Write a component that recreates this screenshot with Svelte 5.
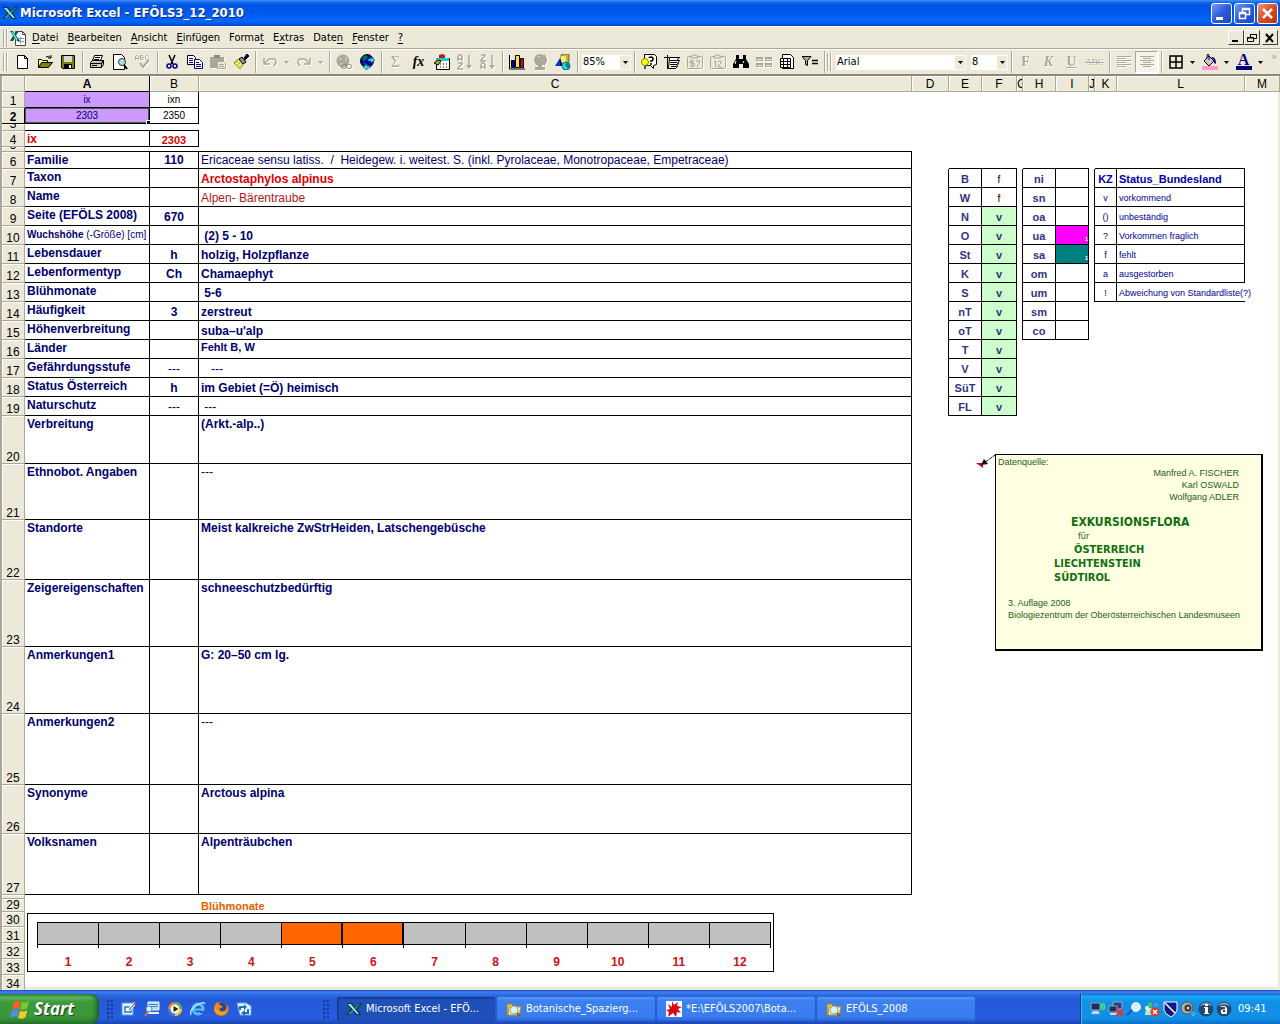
<script lang="ts">
  type Cell = { v: string; cls?: string };
  type Row = { n: number; h: number; cells?: Record<string, Cell> };

  const menus = [
    ["", "D", "atei"],
    ["", "B", "earbeiten"],
    ["", "A", "nsicht"],
    ["", "E", "infügen"],
    ["Forma", "t", ""],
    ["E", "x", "tras"],
    ["Date", "n", ""],
    ["", "F", "enster"],
    ["", "?", ""],
  ];

  // ========
  // Icons
  // ========

  const bw = 'fill="#fff" stroke="#000"';
  const folder =
    '<path d="M1 3h5l1 2h7v9H1z" fill="#f0c850" stroke="#a87818"/><path d="M3 6h12l-2 8H2z" fill="#ffe9a0" stroke="#c09028"/><circle cx="8" cy="9" r="4" fill="#d8f4ff" stroke="#78b0c8"/><path d="M11 12l3 3" stroke="#806020" stroke-width="2"/>';
  const orb = '<circle cx="8" cy="8" r="7.500" fill="#234a72"/><path d="M2 5a7 7 0 0 1 12 0q-6-3-12 0" fill="#7fa8c8"/>';

  const icons: Record<string, string> = {
    excel:
      '<path d="M1 2h5l3 4 4-4h3l-5 6 4 6h-5L7 10l-4 4H0l5-6z" fill="#083838"/><path d="M2 3h3l8 10h-2z" fill="#58d8d0"/><path d="M13 3h1L4 13H2z" fill="#30b8b0"/><path d="M3 3l9 10" stroke="#e8ffff"/>',
    book:
      '<path d="M5.500 1.500h7l3 3v11h-10z" fill="#fff" stroke="#444"/><path d="M12.500 1.500v3h3" fill="none" stroke="#444"/><path d="M8 8.500h6M8 11.500h6M10.500 7v7" stroke="#99a"/><path d="M0 1h3l2 3 2-3h2L6 5.500 10 11H7L5 8l-2 3H0l3-5z" fill="#055"/><path d="M2 2l5 8" stroke="#5fe8e0" stroke-width="1.500"/>',
    new: `<path d="M3.500 1.500h7l3 3v10h-10z" ${bw}/><path d="M10.500 1.500v3h3" fill="none" stroke="#000"/>`,
    open:
      '<path d="M1.500 13.500v-8h3l1 1h5v3" fill="#ffff80" stroke="#000"/><path d="M1.500 13.500l3-5h11l-4 5z" fill="#808000" stroke="#000"/><path d="M9 3q3-2 5 1M14 1v3h-3" fill="none" stroke="#000"/>',
    save:
      '<path d="M1.500 1.500h13v13h-12l-1-1z" fill="#808000" stroke="#000"/><path d="M4 2h8v6H4z" fill="#d8d8d0"/><path d="M4 10h8v4H4z" fill="#000"/><path d="M9 11h2v3H9z" fill="#fff"/>',
    print:
      '<path d="M5.500 1.500h8l-2 5h-8z" fill="#fff" stroke="#000"/><path d="M6 3.500h5M5 5.500h5" stroke="#000"/><path d="M1.500 8.500l2-2h11l-2 3h-11zM1.500 9.500h11v4h-11zM12.500 9.500l2-3v4l-2 3" fill="#c8c8c0" stroke="#000"/><path d="M3 11.500h5" stroke="#000"/><path d="M9 11h2v1H9z" fill="#ff0"/>',
    preview:
      '<path d="M1.500 .5h8l3 3v12h-11z" fill="#fff" stroke="#000"/><circle cx="10" cy="8" r="3.500" fill="#b0e0e8" stroke="#333"/><path d="M12 11l3 4" stroke="#000" stroke-width="2"/>',
    spell:
      '<path d="M.5 6V2.500l1-1h1l1 1V6M.5 4.500h3M5.500 5.500v-4h2l1 1-1 1h-2 2l1 1-1 1zM13.500 2.500l-1-1h-1l-1 1v2l1 1h1l1-1" fill="none" stroke="#aca899"/><path d="M5 9l3 4 6-7" fill="none" stroke="#aca899" stroke-width="2"/>',
    cut:
      '<path d="M5 1l4 9M11 1L7 10" stroke="#000" stroke-width="1.500"/><circle cx="5" cy="12" r="2" fill="none" stroke="#008" stroke-width="1.500"/><circle cx="11" cy="12" r="2" fill="none" stroke="#008" stroke-width="1.500"/>',
    copy:
      '<path d="M.5 1.500h6l2 2v7h-8z" fill="#fff" stroke="#000"/><path d="M2 4.500h4M2 6.500h4M2 8.500h4" stroke="#008"/><path d="M7.500 5.500h5l3 3v6h-8z" fill="#fff" stroke="#008"/><path d="M9 8.500h3M9 10.500h5M9 12.500h5" stroke="#008"/>',
    paste:
      '<path d="M0 3h14v11H0z" fill="#aca899"/><path d="M4 1h6v3H4z" fill="#8d897a"/><path d="M7.500 7.500h6l2 2v5h-8z" fill="#ece9d8" stroke="#aca899"/><path d="M9 10.500h5M9 12.500h5" stroke="#aca899"/>',
    brush:
      '<path d="M11 4l3-4 2 2-4 4z" fill="#008" stroke="#000"/><path d="M6 5l3-2 4 5-3 2z" fill="#a88" stroke="#000"/><path d="M5 5l5 6-3 4-6-6z" fill="#ffff70" stroke="#886"/><path d="M2 9l3-2M4 11l3-2M6 13l2-2" stroke="#aa0"/><path d="M0 14h3v1H0z" fill="#ff6"/>',
    undo: '<path d="M2 4v6h6M3 9l4-4h4q3 0 3 4l-2 3" fill="none" stroke="#aca899" stroke-width="1.500"/>',
    redo: '<path d="M14 4v6H8M13 9L9 5H5Q2 5 2 9l2 3" fill="none" stroke="#aca899" stroke-width="1.500"/>',
    link:
      '<circle cx="7" cy="7" r="6.500" fill="#aca899"/><path d="M3 4h3v2H3zM9 3h2v4H9zM4 9h3v2H4z" fill="#c8c4b4"/><rect x="5.500" y="10.500" width="5" height="4" rx="2" fill="none" stroke="#8d897a"/><rect x="10.500" y="10.500" width="5" height="4" rx="2" fill="none" stroke="#8d897a"/>',
    web:
      '<circle cx="8" cy="7" r="6.500" fill="#0000b8" stroke="#000"/><path d="M3 3l4-2 2 2-2 3-3 1zM10 3l4 2v4l-3-2z" fill="#007830"/><path d="M4 8l4 2-1 3z" fill="#007830"/><path d="M9 5h3V3l4 3-4 3V7H9zM11 12H8v-2l-4 3 4 3v-2h3z" fill="#30e8f0" stroke="#044" stroke-width=".5"/>',
    fnwiz:
      '<path d="M2.500 4.500h13v11h-13z" fill="#fff" stroke="#000"/><path d="M2 4h13v3H2z" fill="#20c8d8"/><path d="M5 4V1l3-1 3 1v3z" fill="#b02020"/><path d="M0 9l4-3 3 1-3 4z" fill="#b8b800" stroke="#000"/><path d="M6 10h1M9 10h1M12 10h1M6 13h1M9 13h1M12 13h1" stroke="#000"/>',
    sortaz:
      '<path d="M1 7V3l1-2h2l1 2v4M1 5h4M1 9h4v1l-4 4v1h5" fill="none" stroke="#aca899" stroke-width="1.500"/><path d="M12 1v10" stroke="#aca899" stroke-width="1.500"/><path d="M9 11h6l-3 4z" fill="#aca899"/>',
    sortza:
      '<path d="M1 1h4v1L1 6v1h5M1 15v-4l1-2h2l1 2v4M1 13h4" fill="none" stroke="#aca899" stroke-width="1.500"/><path d="M12 1v10" stroke="#aca899" stroke-width="1.500"/><path d="M9 11h6l-3 4z" fill="#aca899"/>',
    chart:
      '<path d="M.5 1v14H16" fill="none" stroke="#000"/><path d="M2.500 6.500h3v7h-3z" fill="#0000b0" stroke="#000"/><path d="M6.500 1.500h4v12h-4z" fill="#ffe040" stroke="#000"/><path d="M11.500 4.500h3v9h-3z" fill="#d01010" stroke="#000"/>',
    globe:
      '<circle cx="8" cy="6" r="6" fill="#aca899"/><path d="M12 1q4 5 0 10M7 12h2v2H7zM4 14h8v1H4z" fill="none" stroke="#aca899" stroke-width="2"/><path d="M6 2h2v1H6z" fill="#ddd"/>',
    draw:
      '<path d="M6 1l3-1h5v8l-2 1H6z" fill="#c8b030" stroke="#665"/><path d="M6 2h5v7H6z" fill="#ffec60"/><path d="M0 12l5-8v8z" fill="#1030d0"/><path d="M5 4l3 8H5z" fill="#000070"/><circle cx="11" cy="12" r="4" fill="#20d8e8" stroke="#078"/><path d="M12 8q4 2 3 5l-2 2-3-4z" fill="#108080"/>',
    help:
      '<path d="M3.500 .5h10l2 2v8l-3 1v3l-3-3h-6z" fill="#fffff0" stroke="#000"/><path d="M8 4q0-1 2-1 2 0 2 2t-2 2v1M10 9v2" fill="none" stroke="#000" stroke-width="1.500"/><circle cx="4" cy="8" r="3.500" fill="#ff0" stroke="#880"/><path d="M3 12h2v3H3z" fill="#555"/>',
    autofmt:
      '<path d="M3.500 1v14M0 3.500h16" stroke="#000"/><path d="M5.500 3.500h9l-1 3h2l-2 3h1l-2 3h1l-2 2h-7z" fill="#fff" stroke="#000"/><path d="M6 6.500h8M6 8.500h7M6 10.500h7M7 12.500h5" stroke="#000"/>',
    clip7:
      '<rect x=".5" y="2.500" width="15" height="12" rx="1" fill="#ece9d8" stroke="#aca899"/><path d="M4 4V2h2V1h3v1h2v2z" fill="#ece9d8" stroke="#aca899"/><path d="M7 7H3v2h4v3H3M5 6v7M9 7h4l-3 6" fill="none" stroke="#aca899"/>',
    clip12:
      '<rect x=".5" y="2.500" width="15" height="12" rx="1" fill="#ece9d8" stroke="#aca899"/><path d="M4 4V2h2V1h3v1h2v2z" fill="#ece9d8" stroke="#aca899"/><path d="M4 8l1.500-1v6M8 8l1-1h2v2l-3 3v1h4" fill="none" stroke="#aca899"/>',
    find:
      '<path d="M3 1h3v4h4V1h3v4l3 5v4h-6v-4H6v4H0v-4l3-5z" fill="#000"/><path d="M3 7l-1 3M11 7l-1 2" stroke="#fff"/>',
    panes:
      '<path d="M0 3h7v4H0zM9 3h7v4H9zM0 9h7v4H0zM9 9h7v4H9z" fill="#aca899"/><path d="M1 5.500h5M10 5.500h5M1 11.500h5M10 11.500h5" stroke="#ece9d8"/>',
    sheet:
      '<path d="M3.500 .5h8l3 3v11h-11z" fill="#fff" stroke="#000"/><path d="M1.500 4.500h10v9h-10z" fill="#fff" stroke="#000"/><path d="M1 7.500h10M1 10.500h10M4.500 4v9M8.500 4v9" stroke="#000"/>',
    filter:
      '<path d="M0 2.500h9l-3.500 4v5l-2-1v-4z" fill="#aaa" stroke="#000"/><path d="M10 6.500h6M10 9.500h6" stroke="#000" stroke-width="1.500"/>',
    left: '<path d="M1 2.500h14M1 4.500h9M1 6.500h14M1 8.500h9M1 10.500h14M1 12.500h9" stroke="#aca899"/>',
    center: '<path d="M1 2.500h14M4 4.500h8M1 6.500h14M4 8.500h8M1 10.500h14M4 12.500h8" stroke="#aca899"/>',
    borders: '<path d="M2 2h12v12H2zM8 2v12M2 8h12" fill="none" stroke="#000" stroke-width="1.500"/>',
    fill:
      '<path d="M2 7l5-5 5 5-5 5z" fill="#c8c8c0" stroke="#000"/><path d="M5 4V1q1-2 2 0v5" fill="none" stroke="#000080"/><path d="M9 3q5-1 5 7l-2-1V6z" fill="#000080"/><path d="M0 12h16v4H0z" fill="#ff99cc"/>',
    launchDesk:
      '<path d="M1 2h11v12H1z" fill="#e0f4ff" stroke="#58a0e0"/><path d="M4 6h6v5H4z" fill="#fff" stroke="#2878c0" stroke-width="1.500"/><path d="M8 9l6-7" stroke="#fff" stroke-width="3"/><path d="M8 9l6-7" stroke="#204878"/><path d="M13 1h2v3h-2z" fill="#e04830"/>',
    launchFind:
      '<path d="M4 1h11v8H4z" fill="#b8dcf8" stroke="#e8f4ff"/><path d="M5 3.500h9M5 5.500h9" stroke="#4888c8"/><path d="M4 11h11v2H4z" fill="#f0f0e0"/><circle cx="5" cy="8" r="3" fill="#d0f0ff" stroke="#68a"/><path d="M4 11l-3 4" stroke="#c07848" stroke-width="2"/>',
    media:
      '<circle cx="8" cy="8" r="7" fill="#f08020"/><path d="M8 1a7 7 0 0 1 7 7H8z" fill="#50b040"/><path d="M1 8a7 7 0 0 0 7 7V8z" fill="#3878d8"/><path d="M15 8a7 7 0 0 1-7 7V8z" fill="#f0c830"/><circle cx="8" cy="8" r="4.500" fill="#fff"/><path d="M6.500 5l5 3-5 3z" fill="#222"/>',
    ie:
      '<circle cx="8" cy="8" r="5" fill="none" stroke="#58c0f8" stroke-width="3"/><path d="M4 8.500h9" stroke="#58c0f8" stroke-width="2"/><path d="M10 10h6v2h-6z" fill="#245ad8"/><path d="M1 14Q-1 9 7 4q7-4 8-1" fill="none" stroke="#a8e0ff" stroke-width="1.500"/>',
    firefox:
      '<circle cx="8" cy="8" r="7" fill="#e06810"/><circle cx="9" cy="6" r="4.500" fill="#284898"/><path d="M1 7q1-5 4-6 0 2 2 3l3 2-4 2q1 3 5 2t3-7q4 7-2 11-8 2-11-4z" fill="#f08818"/><path d="M2 8q3 6 10 4" fill="none" stroke="#ffc840"/>',
    sync:
      '<path d="M1 2h9l5 3v9H4z" fill="#e8f8ff" stroke="#60a8e0"/><path d="M3 9V5h5V3l3 3-3 3V7H5v2zM13 8v5H9v2l-4-3 4-3v2h2V8z" fill="#2070c0"/>',
    folder,
    redapp:
      '<path d="M0 0h16v16H0z" fill="#fff"/><path d="M6 0l2 4 4-3-1 4 5 1-4 2 3 4-4-1-1 5-3-4-5 4 1-5-3-2 4-1-2-5 4 3z" fill="#d80818"/>',
    net:
      '<path d="M1 2h9v7H1z" fill="#183060" stroke="#8ab"/><path d="M3 10h5l2 3H1z" fill="#c8d8e8"/><path d="M11 3q2 2 0 5M13 2q3 4 0 7" fill="none" stroke="#50f050" stroke-width="1.500"/>',
    netoff:
      '<path d="M5 1h9v7H5z" fill="#304078" stroke="#9ac"/><path d="M1 5h8v6H1z" fill="#183060" stroke="#8ab"/><path d="M2 12h7v2H2z" fill="#c8d8e8"/><path d="M8 8l7 7M15 8l-7 7" stroke="#f02830" stroke-width="2"/>',
    lens: '<circle cx="10" cy="6" r="4.500" fill="#d8f4ff" stroke="#e8f8ff"/><path d="M6 9l-5 5" stroke="#3050a0" stroke-width="2"/>',
    people:
      '<circle cx="6" cy="4" r="2.500" fill="#48c068"/><circle cx="12" cy="4" r="2.500" fill="#4898e0"/><path d="M1 14q0-7 5-7t5 7z" fill="#b8e8c0"/><circle cx="3" cy="7" r="2" fill="#fff"/><circle cx="11" cy="11" r="4.500" fill="#e03820"/><path d="M9 9l4 4M13 9l-4 4" stroke="#fff" stroke-width="1.500"/>',
    shield: '<path d="M2 1h13v8q-1 4-6 7-6-3-7-7z" fill="#101888" stroke="#fff"/><path d="M3 2l10 10" stroke="#fff" stroke-width="1.500"/>',
    speaker:
      '<circle cx="7" cy="7" r="6" fill="#b0b0a8" stroke="#555"/><circle cx="8" cy="7" r="3.500" fill="#383838"/><circle cx="8" cy="7" r="1.500" fill="#ccc"/><path d="M11 13l3-2M12 15l4-3" stroke="#80c8ff"/>',
    info: orb + '<path d="M7 3h3v2H7zM6 6h4v6h1v1H6v-1h1V7H6z" fill="#fff"/>',
    avast: orb + '<path d="M5 5h4l2 2v6H6l-1-1V9l4-1V6H5zM7 9v2h2V9z" fill="#fff"/>',
    flag:
      '<path d="M4 4q4-3 8-1l-2 8q-4-2-8 1z" fill="#f06028"/><path d="M13 3q4 2 8-1l-2 8q-4 3-8 1z" fill="#78c830"/><path d="M2 13q4-3 8-1l-2 8q-4-2-8 1z" fill="#4890f0"/><path d="M11 13q4 2 8-1l-2 8q-4 3-8 1z" fill="#ffc828"/>',
  };

  type Tool = { icon?: string; text?: string; cls?: string; label: string; off?: boolean; drop?: boolean };

  const fileTools: Tool[][] = [
    [{ icon: "new", label: "Neu" }, { icon: "open", label: "Öffnen" }, { icon: "save", label: "Speichern" }],
    [
      { icon: "print", label: "Drucken" },
      { icon: "preview", label: "Seitenansicht" },
      { icon: "spell", label: "Rechtschreibung", off: true },
    ],
    [
      { icon: "cut", label: "Ausschneiden" },
      { icon: "copy", label: "Kopieren" },
      { icon: "paste", label: "Einfügen", off: true },
      { icon: "brush", label: "Format übertragen" },
    ],
    [
      { icon: "undo", label: "Rückgängig", off: true, drop: true },
      { icon: "redo", label: "Wiederholen", off: true, drop: true },
    ],
    [{ icon: "link", label: "Hyperlink", off: true }, { icon: "web", label: "Web-Symbolleiste" }],
    [
      { text: "Σ", cls: "sigma", label: "Summe", off: true },
      { text: "fx", cls: "fx", label: "Funktion" },
      { icon: "fnwiz", label: "Steuerelement" },
      { icon: "sortaz", label: "Aufsteigend", off: true },
      { icon: "sortza", label: "Absteigend", off: true },
    ],
    [
      { icon: "chart", label: "Diagramm" },
      { icon: "globe", label: "Karte", off: true },
      { icon: "draw", label: "Zeichnen" },
    ],
  ];

  const extraTools: Tool[] = [
    { icon: "help", label: "Hilfe" },
    { icon: "autofmt", label: "Kamera" },
    { icon: "clip7", label: "Werte einfügen", off: true },
    { icon: "clip12", label: "Formate einfügen", off: true },
    { icon: "find", label: "Suchen" },
    { icon: "panes", label: "Fenster fixieren", off: true },
    { icon: "sheet", label: "Tabelle" },
    { icon: "filter", label: "Filter" },
  ];

  const formatTools: Tool[][] = [
    [
      { text: "F", cls: "bold", label: "Fett", off: true },
      { text: "K", cls: "bold italic", label: "Kursiv", off: true },
      { text: "U", cls: "bold under", label: "Unterstrichen", off: true },
      { text: "ABC", cls: "strike", label: "Durchgestrichen", off: true },
    ],
    [
      { icon: "left", label: "Linksbündig", off: true },
      { icon: "center", label: "Zentriert", off: true, cls: "pressed" },
    ],
    [
      { icon: "borders", label: "Rahmen", drop: true },
      { icon: "fill", label: "Füllfarbe", drop: true },
      { text: "A", cls: "fontcolor", label: "Schriftfarbe", drop: true },
    ],
  ];

  // ========
  // Sheet
  // ========

  // column C takes the remaining width
  const columns: [string, number | null][] = [
    ["A", 125], ["B", 49], ["C", null], ["D", 37], ["E", 33], ["F", 35], ["G", 6],
    ["H", 33], ["I", 33], ["J", 6], ["K", 22], ["L", 128], ["M", 35],
  ];

  const rows: Row[] = [
    { n: 1, h: 16, cells: { A: { v: "ix", cls: "sel small mid" }, B: { v: "ixn", cls: "small mid black" } } },
    { n: 2, h: 16, cells: { A: { v: "2303", cls: "sel active small mid" }, B: { v: "2350", cls: "small mid black" } } },
    { n: 3, h: 7 },
    { n: 4, h: 16, cells: { A: { v: "ix", cls: "label red" }, B: { v: "2303", cls: "num red size11" } } },
    { n: 5, h: 5 },
    {
      n: 6,
      h: 17,
      cells: {
        A: { v: "Familie", cls: "label" },
        B: { v: "110", cls: "num" },
        C: { v: "Ericaceae sensu latiss.  /  Heidegew. i. weitest. S. (inkl. Pyrolaceae, Monotropaceae, Empetraceae)", cls: "plain" },
      },
    },
    entry(7, 19, "Taxon", "", "Arctostaphylos alpinus", "red"),
    entry(8, 19, "Name", "", "Alpen- Bärentraube", "plain darkred"),
    entry(9, 19, "Seite (EFÖLS 2008)", "670", ""),
    entry(10, 19, "Wuchshöhe", "", " (2) 5 - 10"),
    entry(11, 19, "Lebensdauer", "h", "holzig, Holzpflanze"),
    entry(12, 19, "Lebenformentyp", "Ch", "Chamaephyt"),
    entry(13, 19, "Blühmonate", "", " 5-6"),
    entry(14, 19, "Häufigkeit", "3", "zerstreut"),
    entry(15, 19, "Höhenverbreitung", "", "suba–u'alp"),
    entry(16, 19, "Länder", "", "Fehlt B, W", "top size11"),
    entry(17, 19, "Gefährdungsstufe", "---", "   ---", "plain"),
    entry(18, 19, "Status Österreich", "h", "im Gebiet (=Ö) heimisch"),
    entry(19, 19, "Naturschutz", "---", " ---", "plain"),
    entry(20, 48, "Verbreitung", "", "(Arkt.-alp..)", "top"),
    entry(21, 56, "Ethnobot. Angaben", "", "---", "top plain"),
    entry(22, 60, "Standorte", "", "Meist kalkreiche ZwStrHeiden, Latschengebüsche", "top"),
    entry(23, 67, "Zeigereigenschaften", "", "schneeschutzbedürftig", "top"),
    entry(24, 67, "Anmerkungen1", "", "G: 20–50 cm lg.", "top"),
    entry(25, 71, "Anmerkungen2", "", "---", "top plain"),
    entry(26, 49, "Synonyme", "", "Arctous alpina", "top"),
    entry(27, 61, "Volksnamen", "", "Alpenträubchen", "top"),
    { n: 28, h: 4 },
    { n: 29, h: 13, cells: { C: { v: "Blühmonate", cls: "orange size11" } } },
    { n: 30, h: 15 },
    { n: 31, h: 16 },
    { n: 32, h: 16 },
    { n: 33, h: 16 },
    { n: 34, h: 16 },
  ];

  const lands = ["B", "W", "N", "O", "St", "K", "S", "nT", "oT", "T", "V", "SüT", "FL"];
  const levels = ["ni", "sn", "oa", "ua", "sa", "om", "um", "sm", "co"];
  const legend = [
    ["KZ", "Status_Bundesland"],
    ["v", "vorkommend"],
    ["()", "unbeständig"],
    ["?", "Vorkommen fraglich"],
    ["f", "fehlt"],
    ["a", "ausgestorben"],
    ["!", "Abweichung von Standardliste(?)"],
  ];

  // the side tables all start in row 7
  for (const row of rows) {
    const i = row.n - 7;
    if (i < 0 || !row.cells) continue;
    if (lands[i]) {
      row.cells.E = { v: lands[i], cls: "code" };
      row.cells.F = i < 2 ? { v: "f", cls: "small mid black" } : { v: "v", cls: "code present" };
    }
    if (levels[i]) {
      row.cells.H = { v: levels[i], cls: "code" };
      if (levels[i] === "ua") row.cells.I = { v: "1", cls: "tiny magenta" };
      if (levels[i] === "sa") row.cells.I = { v: "1", cls: "tiny teal" };
    }
    if (legend[i]) {
      row.cells.K = { v: legend[i][0], cls: i ? "small mid key" : "size11 mid keyhead" };
      row.cells.L = { v: legend[i][1], cls: i ? "small key" : "size11 keyhead" };
    }
  }

  // first and last row of the ruled area per column
  const rightRule: Record<string, [number, number]> = {
    A: [6, 27], B: [6, 27], C: [6, 27], D: [7, 19], E: [7, 19], F: [7, 19],
    G: [7, 15], H: [7, 15], I: [7, 15], J: [7, 13], K: [7, 13], L: [7, 12],
  };
  const bottomRule: Record<string, [number, number]> = {
    A: [1, 27], B: [1, 27], C: [5, 27], E: [6, 19], F: [6, 19],
    H: [6, 15], I: [6, 15], K: [6, 13], L: [6, 13],
  };

  const months = Array.from({ length: 12 }, (_, i) => i + 1);

  const launchers = [
    ["launchDesk", "Desktop anzeigen"],
    ["launchFind", "Suche"],
    ["media", "Media Player"],
    ["ie", "Internet Explorer"],
    ["firefox", "Firefox"],
    ["sync", "Synchronisieren"],
  ];

  const tasks = [
    ["excel", "Microsoft Excel - EFÖ..."],
    ["folder", "Botanische_Spazierg..."],
    ["redapp", "*E:\\EFÖLS2007\\Bota..."],
    ["folder", "EFÖLS_2008"],
  ];

  const tray = ["net", "netoff", "lens", "people", "shield", "speaker", "info", "avast"];

  function entry(n: number, h: number, label: string, code: string, text: string, cls = ""): Row {
    return {
      n,
      h,
      cells: {
        A: { v: label, cls: "label" },
        B: { v: code, cls: code === "---" ? "num plain" : "num" },
        C: { v: text, cls },
      },
    };
  }

  function within(range: [number, number] | undefined, n: number) {
    return !!range && n >= range[0] && n <= range[1];
  }

  function ruleRight(col: string, n: number) {
    if ((col === "A" || col === "B") && (n < 3 || n === 4)) return true;
    return within(rightRule[col], n);
  }
</script>

{#snippet icon(name: string, size = 16)}
  <svg class="icon" width={size} height={size} viewBox="0 0 16 16" aria-hidden="true">{@html icons[name]}</svg>
{/snippet}

{#snippet tool(t: Tool)}
  <button class="tool {t.icon ? (t.cls ?? '') : ''}" class:off={t.off} aria-label={t.label}>
    {#if t.icon}
      {@render icon(t.icon)}
    {:else}
      <span class="glyph {t.cls}">{t.text}</span>
    {/if}
  </button>
  {#if t.drop}
    <button class="drop" class:off={t.off} aria-label="{t.label}: Auswahl">
      <svg width="5" height="3" viewBox="0 0 5 3"><path d="M0 0h5L2.500 3z" fill="currentColor" /></svg>
    </button>
  {/if}
{/snippet}

{#snippet combo(label: string, value: string, cls: string)}
  <label class="combo {cls}">
    <select aria-label={label}><option>{value}</option></select>
    <span class="arrow">
      <svg width="5" height="3" viewBox="0 0 5 3"><path d="M0 0h5L2.500 3z" /></svg>
    </span>
  </label>
{/snippet}

<div class="desktop">
  <header class="titlebar">
    {@render icon("excel")}
    <h1>Microsoft Excel - EFÖLS3_12_2010</h1>
    <button class="win" aria-label="Minimieren">
      <svg width="19" height="19" viewBox="0 0 19 19"><path d="M4 13h7v3H4z" fill="#fff" /></svg>
    </button>
    <button class="win" aria-label="Verkleinern">
      <svg width="19" height="19" viewBox="0 0 19 19">
        <path d="M7.500 8V4.500h7v6H11M7 5.500h8M4.500 8.500h6v6h-6zM4 9.500h7" fill="none" stroke="#fff" stroke-width="1.500" />
      </svg>
    </button>
    <button class="win close" aria-label="Schließen">
      <svg width="19" height="19" viewBox="0 0 19 19"><path d="M5 5l9 9M14 5l-9 9" stroke="#fff" stroke-width="2.500" /></svg>
    </button>
  </header>

  <nav class="menubar">
    <span class="grip"></span>
    <span class="book">{@render icon("book")}</span>
    {#each menus as [pre, key, post]}
      <button class="menu">{pre}<u>{key}</u>{post}</button>
    {/each}
    <span class="mdi">
      <button aria-label="Mappe minimieren"><svg width="12" height="10"><path d="M2 7h6v2H2z" /></svg></button>
      <button aria-label="Mappe wiederherstellen">
        <svg width="12" height="10"><path d="M4.500 4V1.500h6v4H8M4 1.500h7M1.500 4.500h6v4h-6zM1 5h7" fill="none" stroke="#000" /></svg>
      </button>
      <button class="last" aria-label="Mappe schließen">
        <svg width="12" height="10"><path d="M2 1l7 8M9 1L2 9" stroke="#000" stroke-width="2" /></svg>
      </button>
    </span>
  </nav>

  <div class="toolbar">
    <span class="grip"></span>
    {#each fileTools as group}
      {#each group as t}{@render tool(t)}{/each}
      <span class="sep"></span>
    {/each}
    {@render combo("Zoom", "85%", "zoom")}
    <span class="sep"></span>
    {#each extraTools as t}{@render tool(t)}{/each}
    <span class="sep"></span>
    <span class="grip"></span>
    {@render combo("Schriftart", "Arial", "font")}
    {@render combo("Schriftgrad", "8", "size")}
    {#each formatTools as group}
      <span class="sep"></span>
      {#each group as t}{@render tool(t)}{/each}
    {/each}
    <button class="more" aria-label="Weitere Schaltflächen">»</button>
  </div>

  <main class="sheet">
    <table class="grid">
      <colgroup>
        <col style="width: 23px" />
        {#each columns as [, width]}
          <col style:width={width ? `${width}px` : null} />
        {/each}
      </colgroup>
      <thead>
        <tr>
          <th aria-label="Alles markieren"></th>
          {#each columns as [name]}
            <th scope="col" class:current={name === "A"}><div class="letter">{name}</div></th>
          {/each}
        </tr>
      </thead>
      <tbody>
        {#each rows as row}
          <tr style:height="{row.h}px">
            <th scope="row" class:current={row.n === 2}>
              <div class="rownum" style:height="{row.h - 1}px">{row.n === 28 ? "" : row.n}</div>
            </th>
            {#each columns as [col]}
              {@const cell = row.cells?.[col]}
              <td
                class={cell?.cls}
                class:rr={ruleRight(col, row.n)}
                class:rb={within(bottomRule[col], row.n)}
              >{#if cell?.v === "Wuchshöhe"}<span class="height"><b>{cell.v}</b> (-Größe) [cm]</span>{:else if cell}{cell.v}{/if}{#if row.n === 2 && col === "A"}<span class="handle"></span>{/if}</td>
            {/each}
          </tr>
        {/each}
      </tbody>
    </table>

    <figure class="months" aria-label="Blühmonate">
      {#each months as m}
        <div class="month">
          <div class="bar" class:bloom={m === 5 || m === 6}></div>
          <span>{m}</span>
        </div>
      {/each}
    </figure>

    <svg class="pointer" width="20" height="16" viewBox="0 0 20 16" aria-hidden="true">
      <path d="M0 9h7v5z" fill="#d00" />
      <path d="M19 1L8 9" stroke="#000" stroke-dasharray="3 1" />
      <path d="M5 11l3-6 4 5z" />
    </svg>
    <aside class="note">
      <p class="source">Datenquelle:</p>
      <p class="author">Manfred A. FISCHER</p>
      <p class="author">Karl OSWALD</p>
      <p class="author">Wolfgang ADLER</p>
      <div class="work">
        <p class="title">EXKURSIONSFLORA</p>
        <p class="for">für</p>
        <p class="land indent">ÖSTERREICH</p>
        <p class="land">LIECHTENSTEIN</p>
        <p class="land">SÜDTIROL</p>
      </div>
      <p class="imprint">3. Auflage 2008</p>
      <p class="imprint">Biologiezentrum der Oberösterreichischen Landesmuseen</p>
    </aside>
  </main>

  <footer class="taskbar">
    <button class="start">
      <svg width="20" height="20" viewBox="0 0 22 22" aria-hidden="true">{@html icons.flag}</svg>
      Start
    </button>
    <span class="dots"></span>
    <div class="launch">
      {#each launchers as [name, label]}
        <button aria-label={label}>{@render icon(name)}</button>
      {/each}
    </div>
    <span class="dots"></span>
    <div class="tasks">
      {#each tasks as [name, label], i}
        <button class="task" class:on={i === 0}>{@render icon(name)}<span>{label}</span></button>
      {/each}
    </div>
    <div class="tray">
      {#each tray as name}{@render icon(name)}{/each}
      <time>09:41</time>
    </div>
  </footer>
</div>

<style>
  :global(body) {
    margin: 0;
    background: #ece9d8;
  }

  .desktop {
    display: flex;
    flex-direction: column;
    height: 100vh;
    overflow: hidden;
    font: 11px/14px "DejaVu Sans Condensed", "Liberation Sans", sans-serif;
    color: #000;
  }

  button {
    margin: 0;
    padding: 0;
    border: 0;
    background: none;
    font: inherit;
    color: inherit;
  }

  .icon {
    flex: none;
    display: block;
  }

  /* title bar */
  .titlebar {
    flex: none;
    display: flex;
    align-items: center;
    gap: 2px;
    box-sizing: border-box;
    height: 26px;
    padding: 0 2px;
    background: linear-gradient(#3d95ff 0, #1c6cf0 2px, #0053e0 5px, #0058ee 13px, #0468ff 21px, #0450d8 25px, #003cb0);
  }

  h1 {
    flex: 1;
    margin: 0;
    font: bold 13px/20px "DejaVu Sans Condensed", "Liberation Sans", sans-serif;
    color: #fff;
    text-shadow: 1px 1px 0 #0a2a80;
  }

  .win {
    width: 21px;
    height: 21px;
    border: 1px solid #fff;
    border-radius: 3px;
    background: linear-gradient(135deg, #7a9cf0, #2b5be0 50%, #1c48c8);
  }

  .win svg {
    display: block;
  }

  .win.close {
    background: linear-gradient(135deg, #f09878, #dc4a24 50%, #c03010);
  }

  /* menu bar */
  .menubar {
    flex: none;
    display: flex;
    align-items: center;
    box-sizing: border-box;
    height: 23px;
    padding-left: 3px;
    border-bottom: 1px solid #aca899;
    border-top: 1px solid #fff;
    background: #ece9d8;
  }

  .grip {
    flex: none;
    box-sizing: border-box;
    width: 4px;
    height: 18px;
    margin-right: 3px;
    border-left: 1px solid #aca899;
    border-right: 1px solid #aca899;
    box-shadow: 1px 0 0 #fff, inset 1px 0 0 #fff;
  }

  .book {
    margin-right: 2px;
  }

  .menu {
    padding: 0 5px 0 4px;
  }

  u {
    text-underline-offset: 2px;
  }

  .mdi {
    display: flex;
    margin-left: auto;
    padding-right: 2px;
  }

  .mdi button {
    box-sizing: border-box;
    width: 16px;
    height: 15px;
    border: 1px solid;
    border-color: #fff #404040 #404040 #fff;
    background: #ece9d8;
  }

  .mdi svg {
    display: block;
    margin: 1px;
  }

  .mdi .last {
    margin-left: 2px;
  }

  /* toolbar */
  .toolbar {
    flex: none;
    display: flex;
    align-items: center;
    box-sizing: border-box;
    height: 27px;
    padding-left: 3px;
    border-top: 1px solid #fff;
    border-bottom: 2px solid #8d897a;
    background: #ece9d8;
  }

  .tool {
    flex: none;
    display: flex;
    align-items: center;
    justify-content: center;
    width: 23px;
    height: 22px;
  }

  .off {
    color: #aca899;
    filter: drop-shadow(1px 1px 0 #fff);
  }

  .tool.pressed {
    box-sizing: border-box;
    border: 1px solid;
    border-color: #aca899 #fff #fff #aca899;
    background: #f5f3ea;
  }

  .drop {
    flex: none;
    display: flex;
    align-items: center;
    justify-content: center;
    width: 11px;
    height: 22px;
  }

  .sep {
    flex: none;
    box-sizing: border-box;
    width: 2px;
    height: 22px;
    margin: 0 1px 0 3px;
    border-left: 1px solid #aca899;
    border-right: 1px solid #fff;
  }

  .glyph {
    font-family: "Liberation Serif", serif;
    font-size: 14px;
  }

  .sigma {
    font-size: 16px;
  }

  .fx {
    font-weight: bold;
    font-style: italic;
  }

  .bold {
    font-weight: bold;
  }

  .italic {
    font-style: italic;
  }

  .under {
    text-decoration: underline;
  }

  .strike {
    font-size: 9px;
    text-decoration: line-through;
  }

  .fontcolor {
    width: 16px;
    border-bottom: 4px solid #000080;
    font-size: 16px;
    line-height: 12px;
    font-weight: bold;
    text-align: center;
    color: #000080;
  }

  .combo {
    flex: none;
    display: flex;
    box-sizing: border-box;
    height: 15px;
    background: #fff;
  }

  .combo select {
    flex: 1;
    min-width: 0;
    padding: 0 0 0 1px;
    border: 0;
    appearance: none;
    background: #fff;
    font: inherit;
    color: #000;
  }

  .arrow {
    display: flex;
    align-items: center;
    justify-content: center;
    width: 10px;
    border: 1px solid #fff;
    background: #ece9d8;
  }

  .combo.zoom {
    width: 49px;
    margin-left: 2px;
  }

  .combo.font {
    width: 130px;
    margin: 0 5px 0 2px;
  }

  .combo.size {
    width: 37px;
  }

  .more {
    align-self: flex-start;
    margin-left: auto;
    padding-right: 3px;
    color: #aca899;
  }

  /* sheet */
  .sheet {
    position: relative;
    flex: 1;
    min-height: 0;
    overflow: hidden;
    border-left: 2px solid #aca899;
    background: #fff;
    box-shadow: inset -2px -3px 0 #ece9d8;
    font-family: "Liberation Sans", sans-serif;
  }

  .grid {
    width: 100%;
    border-collapse: separate;
    border-spacing: 0;
    table-layout: fixed;
  }

  .grid th {
    padding: 0;
    border-right: 1px solid #aca899;
    border-bottom: 1px solid #aca899;
    background: #ece9d8;
    box-shadow: inset 1px 1px 0 #fff;
    font-weight: normal;
    font-size: 12px;
    line-height: 12px;
    vertical-align: bottom;
  }

  .grid .current {
    border-color: #000;
    font-weight: bold;
  }

  .letter {
    height: 15px;
    line-height: 16px;
    overflow: hidden;
    text-align: center;
  }

  .rownum {
    display: flex;
    align-items: flex-end;
    justify-content: center;
    overflow: hidden;
  }

  .grid td {
    position: relative;
    padding: 0 0 0 2px;
    vertical-align: bottom;
    font-weight: bold;
    font-size: 12px;
    line-height: 15px;
    white-space: pre;
    color: #000070;
  }

  .grid .rr {
    border-right: 1px solid #000;
  }

  .grid .rb {
    border-bottom: 1px solid #000;
  }

  .grid .label,
  .grid .top {
    padding-top: 1px;
    line-height: 14px;
    vertical-align: top;
  }

  .grid .num,
  .grid .mid,
  .grid .code {
    padding: 0;
    text-align: center;
  }

  .grid .plain {
    font-weight: normal;
  }

  .grid .size11 {
    font-size: 11px;
    line-height: 12px;
  }

  .grid .small {
    font-size: 10px;
    font-weight: normal;
  }

  .grid .black {
    color: #000;
  }

  .grid .red {
    color: #e00000;
  }

  .grid .darkred {
    color: #b01818;
  }

  .grid .orange {
    color: #e86000;
  }

  .grid .code {
    font-size: 11px;
    color: #333380;
  }

  .grid .present {
    background: #ccffcc;
  }

  .grid .tiny {
    font-size: 6px;
    line-height: 10px;
    text-align: right;
    color: #fff;
  }

  .grid .magenta {
    background: #ff00ff;
  }

  .grid .teal {
    background: #008080;
  }

  .grid .key {
    font-size: 9px;
    color: #000099;
  }

  .grid .keyhead {
    line-height: 15px;
    color: #0000b0;
  }

  .grid .sel {
    background: #cc99ff;
    color: #000070;
  }

  .grid .active {
    box-shadow: inset 0 0 0 1px #406040;
  }

  .handle {
    position: absolute;
    right: -2px;
    bottom: -2px;
    width: 3px;
    height: 3px;
    border: 1px solid #fff;
    background: #000;
  }

  .height {
    font-size: 10px;
    font-weight: normal;
  }

  /* flowering months */
  .months {
    position: absolute;
    top: 837px;
    left: 25px;
    display: flex;
    box-sizing: border-box;
    width: 747px;
    height: 59px;
    margin: 0;
    padding: 8px 2px 0 9px;
    border: 1px solid #000;
    background: #fff;
  }

  .month {
    flex: 1;
    height: 26px;
    border-left: 1px solid #000;
    text-align: center;
    font: bold 12px/15px "Liberation Sans", sans-serif;
    color: #d01010;
  }

  .month:last-of-type {
    border-right: 1px solid #000;
  }

  .bar {
    height: 21px;
    margin-bottom: 10px;
    border: solid #000;
    border-width: 1px 0;
    background: #c0c0c0;
  }

  .bar.bloom {
    border-right-width: 1px;
    background: #ff6600;
  }

  /* cell comment */
  .note {
    position: absolute;
    top: 378px;
    right: 17px;
    box-sizing: border-box;
    width: 268px;
    height: 197px;
    padding: 2px;
    border: 1px solid #000;
    border-right-width: 2px;
    border-bottom-width: 2px;
    background: #ffffe1;
    font-size: 9px;
    line-height: 12px;
    color: #186018;
  }

  .note p {
    margin: 0;
  }

  .note .source {
    line-height: 10px;
  }

  .note .author {
    padding-right: 20px;
    text-align: right;
  }

  .work {
    padding: 12px 0 12px 56px;
    font-family: "DejaVu Sans Condensed", "Liberation Sans", sans-serif;
    line-height: 14px;
  }

  .note .title {
    padding-left: 17px;
    font-size: 12px;
    font-weight: bold;
    color: #107010;
  }

  .note .for {
    padding-left: 24px;
  }

  .note .land {
    font-size: 11px;
    font-weight: bold;
    color: #107010;
  }

  .note .indent {
    padding-left: 20px;
  }

  .note .imprint {
    padding-left: 10px;
    white-space: nowrap;
  }

  .pointer {
    position: absolute;
    top: 378px;
    right: 284px;
  }

  /* taskbar */
  .taskbar {
    flex: none;
    display: flex;
    align-items: stretch;
    height: 34px;
    background: linear-gradient(#1c50b8 0, #3a80f0 2px, #2c6ae0 5px, #2459d8 10px, #265ee0 28px, #1c46b0 34px);
    color: #fff;
  }

  .start {
    display: flex;
    align-items: center;
    gap: 4px;
    width: 99px;
    margin-top: 4px;
    padding-left: 10px;
    border-radius: 0 8px 8px 0;
    background: linear-gradient(#3c8c3c 0, #5cb85c 3px, #3c9a3c 8px, #3a9838 22px, #2c7c2c 30px);
    box-shadow: inset -3px 0 4px #206020;
    font: italic bold 17px/20px "Open Sans", "Liberation Sans", sans-serif;
    text-shadow: 1px 1px 1px #184018;
  }

  .dots {
    width: 6px;
    margin: 10px 8px 4px;
    background: radial-gradient(circle at 1px 1px, #163c9c 1px, transparent 2px) 0 0 / 4px 4px;
  }

  .launch {
    display: flex;
    align-items: center;
    gap: 7px;
    width: 194px;
    padding-top: 4px;
  }

  .tasks {
    flex: 1;
    display: flex;
    gap: 2px;
    min-width: 0;
    padding: 7px 0 3px;
  }

  .task {
    flex: 0 1 158px;
    box-sizing: border-box;
    display: flex;
    align-items: center;
    gap: 4px;
    min-width: 0;
    padding-left: 9px;
    border-radius: 2px;
    background: linear-gradient(#5a98f8, #3c80f0 4px, #3a7cf0 20px, #2c64d8);
    white-space: nowrap;
  }

  .task.on {
    background: #1e50b8;
    box-shadow: inset 1px 1px 2px #103080;
  }

  .tray {
    display: flex;
    align-items: center;
    gap: 2px;
    box-sizing: border-box;
    width: 200px;
    margin-top: 4px;
    padding-left: 9px;
    border-left: 1px solid #0c3c90;
    background: linear-gradient(#0c68b8 0, #18a8f8 2px, #1290e8 8px, #1290e8 24px, #0c70c8);
    box-shadow: inset 1px 0 0 #30b8ff;
  }

  time {
    margin-left: 4px;
  }
</style>
